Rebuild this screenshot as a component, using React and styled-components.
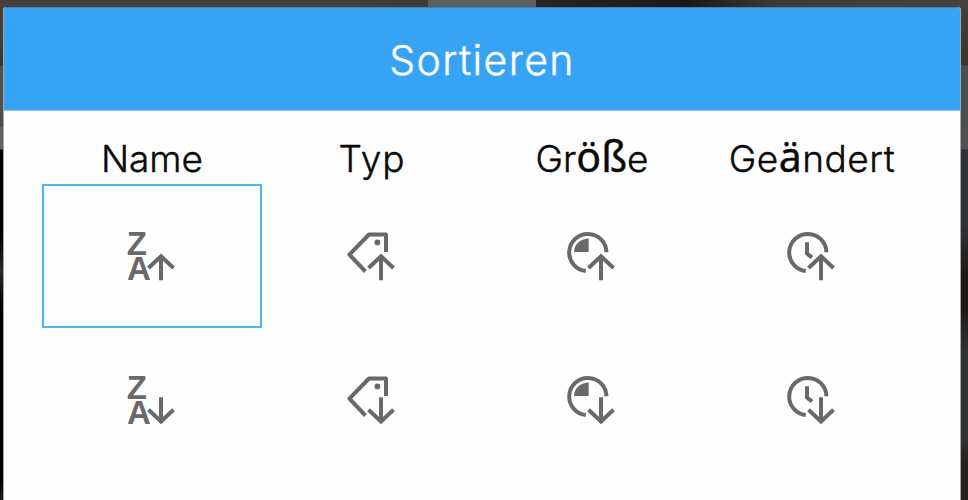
import styled, { createGlobalStyle } from "styled-components";

const GlobalStyle = createGlobalStyle`
  * {
    box-sizing: border-box;
  }
  body {
    margin: 0;
    overflow: hidden;
  }
`;

const Backdrop = styled.div`
  width: 968px;
  height: 500px;
  padding: 7px 7px 0 3px;
  overflow: hidden;
  background-color: #303236;
  background-image: linear-gradient(
      to right,
      #453f38 0 330px,
      #41392f 428px,
      #5c5e5f 428px 536px,
      #2a2523 536px,
      #1c1817 690px,
      #403b32 780px,
      #45433a 968px
    ),
    linear-gradient(
      to bottom,
      #45403a 0 30px,
      #3a342c 65px,
      #4a5052 66px 127px,
      #626262 127px 149px,
      #000000 150px 235px,
      #2c2825 270px,
      #000000 310px 480px,
      #1c1a14 500px
    ),
    linear-gradient(
      to bottom,
      #45403a 0,
      #3c342b 65px,
      #4a4f50 66px 127px,
      #505050 127px 149px,
      #303236 150px 225px,
      #1d1a16 275px 310px,
      #303133 350px 440px,
      #24211d 460px
    );
  background-size: 100% 7px, 4px 100%, 8px 100%;
  background-position: top left, top left, top right;
  background-repeat: no-repeat;
`;

const Dialog = styled.div`
  height: 493px;
  background-color: #fefefe;
  border-left: 1px solid #a5a5a5;
  border-right: 1px solid #a5a5a5;
  border-radius: 3px 3px 0 0;
  overflow: hidden;
`;

const Header = styled.div`
  display: flex;
  align-items: center;
  justify-content: center;
  height: 104px;
  margin: 0 -1px;
  padding-top: 1px;
  background-color: #36a3f5;
  border-top: 1px solid #3a83bb;
  border-bottom: 1px solid #8bc9f9;
`;

const Title = styled.h1`
  margin: 0;
  color: #ffffff;
  font-family: "Inter", "Liberation Sans", sans-serif;
  font-size: 41px;
  font-weight: 300;
  letter-spacing: 1.4px;
  -webkit-text-stroke: 0.4px #ffffff;
`;

const Columns = styled.div`
  display: grid;
  grid-template-columns: repeat(4, 220px);
  grid-template-rows: 73px 144px 144px;
  padding-left: 38px;
`;

const Label = styled.div`
  display: flex;
  align-items: center;
  justify-content: center;
  padding-top: 23px;
  color: #0a0a0a;
  font-family: "Inter", "Liberation Sans", sans-serif;
  font-size: 37px;
  font-weight: 300;
  line-height: 44px;
  letter-spacing: ${({ $spacing }) => $spacing || 0}px;
  white-space: nowrap;
  -webkit-text-stroke: 0.4px #0a0a0a;
`;

const Special = styled.span`
  font-family: "Noto Sans", sans-serif;
  font-size: 41px;
  font-weight: 400;
  line-height: 0;
`;

const Option = styled.button`
  display: flex;
  align-items: center;
  justify-content: center;
  padding: 0;
  background: none;
  border: 2px solid ${({ $active }) => ($active ? "#4dbae6" : "transparent")};
  cursor: pointer;
`;

const Icon = styled.svg`
  display: block;
  width: 50px;
  height: 50px;
  overflow: visible;
  fill: none;
  stroke: #696969;
  stroke-width: 4;
`;

const Letter = styled.text`
  fill: #696969;
  stroke: none;
  font-family: "Liberation Sans", sans-serif;
  font-size: 33px;
  font-weight: 700;
`;

const Solid = styled.path`
  fill: #696969;
  stroke: none;
`;

const Arrow = ({ up }) => (
  <path
    d={
      up
        ? "M34 49.3V25M21.5 37L34 25.2L46.5 37"
        : "M34 22.3V47M21.5 34.7L34 46.5L46.5 34.7"
    }
  />
);

const ring = "M39.4 21.3A18.6 18.6 0 1 0 18.8 40";

const shapes = {
  name: (
    <>
      <Letter x="-0.3" y="23.6">
        Z
      </Letter>
      <Letter x="0" y="49.2">
        A
      </Letter>
    </>
  ),
  type: (
    <>
      <path d="M18.4 40.5L2.4 23.6L22 3.5H39V21" strokeLinejoin="round" />
      <Solid d="M27.5 11.4a2.9 2.9 0 1 0 5.8 0a2.9 2.9 0 1 0 -5.8 0z" />
    </>
  ),
  size: (
    <>
      <path d={ring} />
      <Solid d="M21.7 21H7A14.7 13.5 0 0 1 21.7 7.5z" />
    </>
  ),
  date: (
    <>
      <path d={ring} />
      <path d="M20 11.3V22.5L25 26.5" />
    </>
  ),
};

const columns = [
  { id: "name", label: "Name" },
  { id: "type", label: "Typ", spacing: 1 },
  {
    id: "size",
    label: (
      <span>
        Gr<Special>öß</Special>e
      </span>
    ),
  },
  {
    id: "date",
    spacing: 0.5,
    label: (
      <span>
        Ge<Special>ä</Special>ndert
      </span>
    ),
  },
];

export default function App() {
  return (
    <Backdrop>
      <GlobalStyle />
      <Dialog>
        <Header>
          <Title>Sortieren</Title>
        </Header>
        <Columns>
          {columns.map(({ id, label, spacing }) => (
            <Label key={id} $spacing={spacing}>
              {label}
            </Label>
          ))}
          {["up", "down"].map((direction) =>
            columns.map(({ id }) => (
              <Option
                key={id + direction}
                $active={id === "name" && direction === "up"}
              >
                <Icon viewBox="0 0 50 50">
                  {shapes[id]}
                  <Arrow up={direction === "up"} />
                </Icon>
              </Option>
            ))
          )}
        </Columns>
      </Dialog>
    </Backdrop>
  );
}
